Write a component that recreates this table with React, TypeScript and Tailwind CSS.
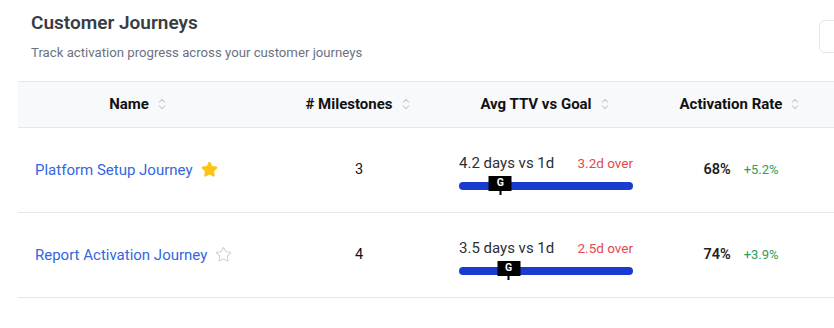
import { ChevronsUpDown, Star } from "lucide-react";

type Journey = {
  name: string;
  starred: boolean;
  milestones: number;
  avgDays: number;
  goalDays: number;
  rate: number;
  delta: string;
};

const journeys: Journey[] = [
  { name: "Platform Setup Journey", starred: true, milestones: 3, avgDays: 4.2, goalDays: 1, rate: 68, delta: "+5.2%" },
  { name: "Report Activation Journey", starred: false, milestones: 4, avgDays: 3.5, goalDays: 1, rate: 74, delta: "+3.9%" },
];

const cols = "grid grid-cols-[242px_198px_176px_214px]";

function HeaderCell({ label }: { label: string }) {
  return (
    <div className="flex items-center justify-center gap-[6px] text-[15px] font-bold text-[#111]">
      <span>{label}</span>
      <ChevronsUpDown size={14} strokeWidth={1.75} className="text-[#c4c8cf]" />
    </div>
  );
}

function TtvBar({ avg, goal }: { avg: number; goal: number }) {
  const over = (avg - goal).toFixed(1);
  const pos = (goal / avg) * 100;
  return (
    <div className="w-[174px]">
      <div className="flex items-baseline justify-between">
        <span className="text-[15px] text-[#2b2f36]">
          {avg} days vs {goal}d
        </span>
        <span className="text-[13.5px] text-[#e5484d]">{over}d over</span>
      </div>
      <div className="relative mt-[8px] h-[8px] rounded-full bg-[#1a3bcf]">
        <div
          className="absolute top-[-6px] flex -translate-x-1/2 flex-col items-center"
          style={{ left: `${pos}%` }}
        >
          <div className="flex h-[15px] w-[23px] items-center justify-center bg-black text-[10.5px] font-bold leading-none text-white">
            G
          </div>
          <div className="h-[4px] w-[2px] bg-black" />
        </div>
      </div>
    </div>
  );
}

export default function App() {
  return (
    <div className="h-[328px] w-[834px] overflow-hidden bg-white font-['Roboto',sans-serif]">
      <div className="flex items-start justify-between pl-[31px] pt-[11px]">
        <div>
          <h1 className="text-[19px] font-semibold leading-[24px] text-[#373c45]">Customer Journeys</h1>
          <p className="mt-[8px] text-[13.2px] text-[#6b7280]">Track activation progress across your customer journeys</p>
        </div>
        <div className="mr-[-20px] mt-[9px] h-[33px] w-[35px] rounded-md border border-[#e5e7eb]" />
      </div>

      <div className="ml-[18px] mt-[18px] w-[830px]">
        <div className={`${cols} h-[47px] items-center border-y border-[#e5e7eb] bg-[#f8f9fb]`}>
          <HeaderCell label="Name" />
          <HeaderCell label="# Milestones" />
          <HeaderCell label="Avg TTV vs Goal" />
          <HeaderCell label="Activation Rate" />
        </div>
        {journeys.map((j) => (
          <div key={j.name} className={`${cols} h-[85px] items-center border-b border-[#e5e7eb]`}>
            <div className="flex items-center gap-[8px] pl-[17px]">
              <span className="text-[15px] text-[#3366e0]">{j.name}</span>
              {j.starred ? (
                <Star size={17} className="fill-[#fbc417] text-[#fbc417]" />
              ) : (
                <Star size={17} strokeWidth={1.5} className="text-[#cbd2dc]" />
              )}
            </div>
            <div className="text-center text-[14.5px] text-[#111]">{j.milestones}</div>
            <div className="flex justify-center pt-[2px]">
              <TtvBar avg={j.avgDays} goal={j.goalDays} />
            </div>
            <div className="flex items-baseline justify-center gap-[13px]">
              <span className="text-[14.5px] font-semibold text-[#222]">{j.rate}%</span>
              <span className="text-[13px] text-[#2f9e57]">{j.delta}</span>
            </div>
          </div>
        ))}
      </div>
    </div>
  );
}
